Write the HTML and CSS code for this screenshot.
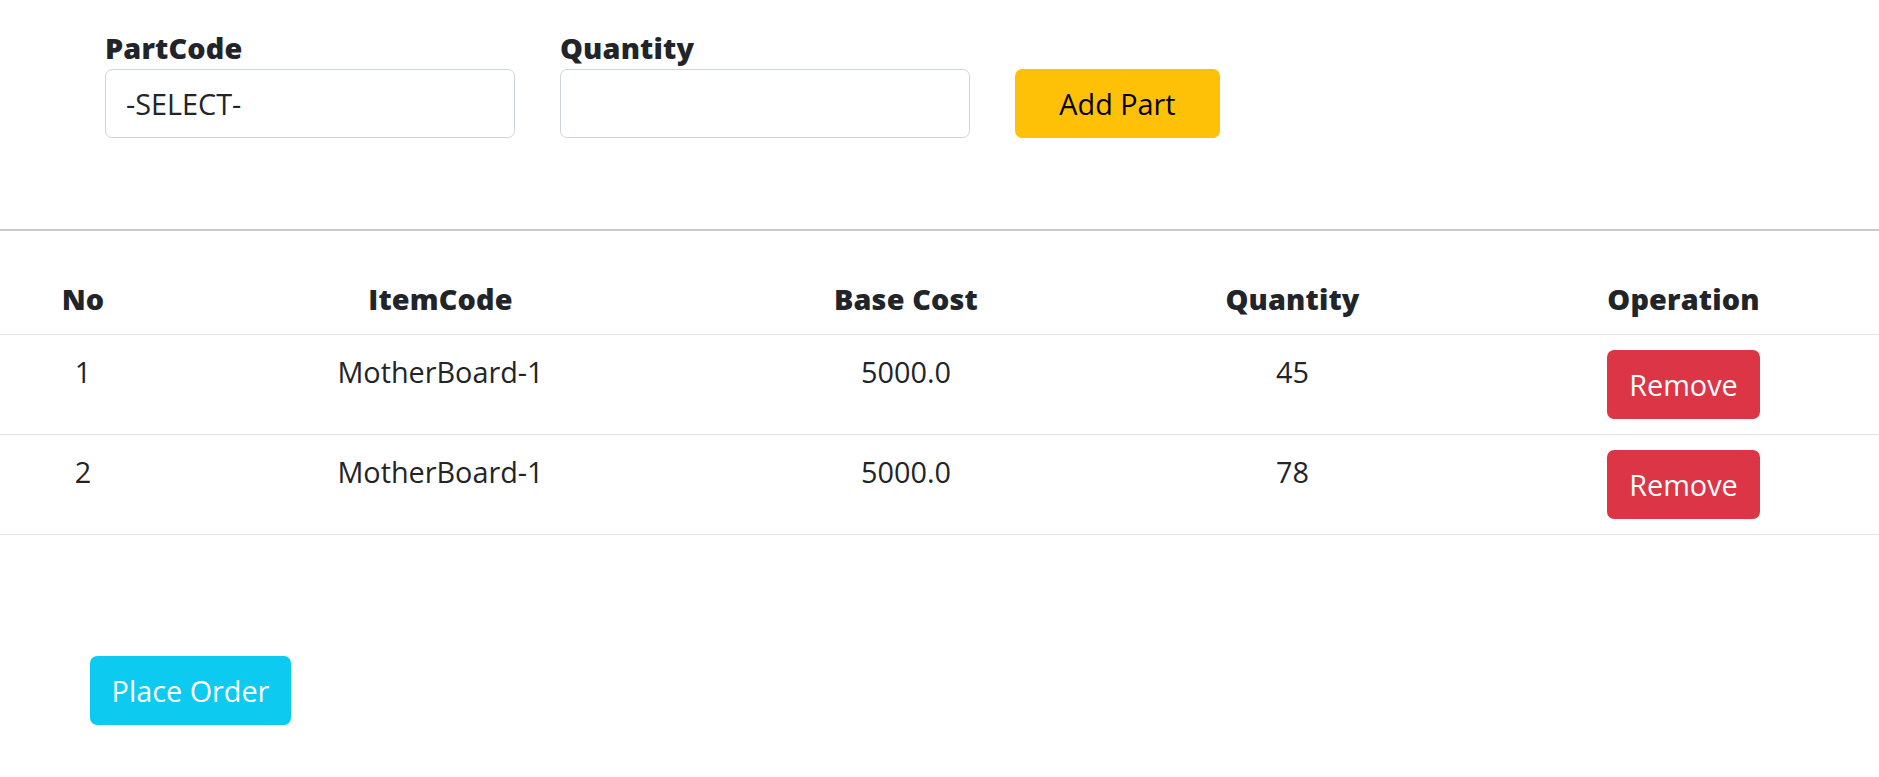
FILE: index.html
```html
<!DOCTYPE html>
<html lang="en">
<head>
<meta charset="utf-8">
<title>Order Parts</title>
<link rel="stylesheet" href="styles.css">
</head>
<body>
  <form class="order-form">
    <div class="field">
      <label class="field-label" for="partcode">PartCode</label>
      <select id="partcode" class="form-control">
        <option>-SELECT-</option>
      </select>
    </div>
    <div class="field">
      <label class="field-label" for="qty">Quantity</label>
      <input id="qty" class="form-control" type="text">
    </div>
    <button type="button" class="btn btn-add">Add Part</button>
  </form>

  <hr class="divider">

  <div class="table-wrap">
    <table class="parts-table">
      <colgroup>
        <col class="c-no">
        <col class="c-item">
        <col class="c-cost">
        <col class="c-qty">
        <col class="c-op">
      </colgroup>
      <thead>
        <tr>
          <th>No</th>
          <th>ItemCode</th>
          <th>Base Cost</th>
          <th>Quantity</th>
          <th>Operation</th>
        </tr>
      </thead>
      <tbody>
        <tr>
          <td>1</td>
          <td>MotherBoard-1</td>
          <td>5000.0</td>
          <td>45</td>
          <td><button type="button" class="btn btn-remove">Remove</button></td>
        </tr>
        <tr>
          <td>2</td>
          <td>MotherBoard-1</td>
          <td>5000.0</td>
          <td>78</td>
          <td><button type="button" class="btn btn-remove">Remove</button></td>
        </tr>
      </tbody>
    </table>
  </div>

  <div class="actions">
    <button type="button" class="btn btn-place">Place Order</button>
  </div>
</body>
</html>
```

FILE: styles.css
```css
* {
  box-sizing: border-box;
}

body {
  margin: 0;
  font-family: "Open Sans", "Noto Sans", sans-serif;
  font-size: 28.8px;
  line-height: 43.2px;
  color: #212529;
  background: #ffffff;
}

.order-form {
  display: flex;
  align-items: flex-end;
  gap: 45px;
  padding: 26px 0 0 105px;
}

.field {
  display: flex;
  flex-direction: column;
  width: 410px;
}

.field-label {
  font-weight: 800;
  line-height: 43.2px;
  letter-spacing: 0.15px;
}

.form-control {
  height: 69px;
  width: 100%;
  padding: 0 20px;
  font: inherit;
  color: #212529;
  background: #ffffff;
  border: 1px solid #ced4da;
  border-radius: 7.2px;
  appearance: none;
  -webkit-appearance: none;
  outline: none;
}

.btn {
  display: inline-flex;
  align-items: center;
  justify-content: center;
  height: 69px;
  padding: 0;
  font: inherit;
  border: none;
  border-radius: 7.2px;
  cursor: pointer;
}

.btn-add {
  width: 205px;
  background: #ffc107;
  color: #000000;
}

.divider {
  margin: 91px 0 31px;
  border: 0;
  border-top: 2px solid #c8c9ca;
}

.table-wrap {
  width: 100%;
}

.parts-table {
  width: 100%;
  border-collapse: collapse;
  table-layout: fixed;
}

.c-no { width: 166px; }
.c-item { width: 549px; }
.c-cost { width: 382px; }
.c-qty { width: 391px; }
.c-op { width: auto; }

.parts-table th,
.parts-table td {
  padding: 14.4px;
  text-align: center;
  vertical-align: top;
  border-bottom: 1px solid #dee2e6;
}

.parts-table th {
  font-weight: 800;
  letter-spacing: 0.15px;
}

.parts-table td {
  padding: 15px 14.4px;
}

.btn-remove {
  width: 153px;
  background: #dc3545;
  color: #ffffff;
}

.actions {
  padding: 121px 0 0 90px;
}

.btn-place {
  width: 201px;
  background: #0dcaf0;
  color: #ffffff;
}
```
